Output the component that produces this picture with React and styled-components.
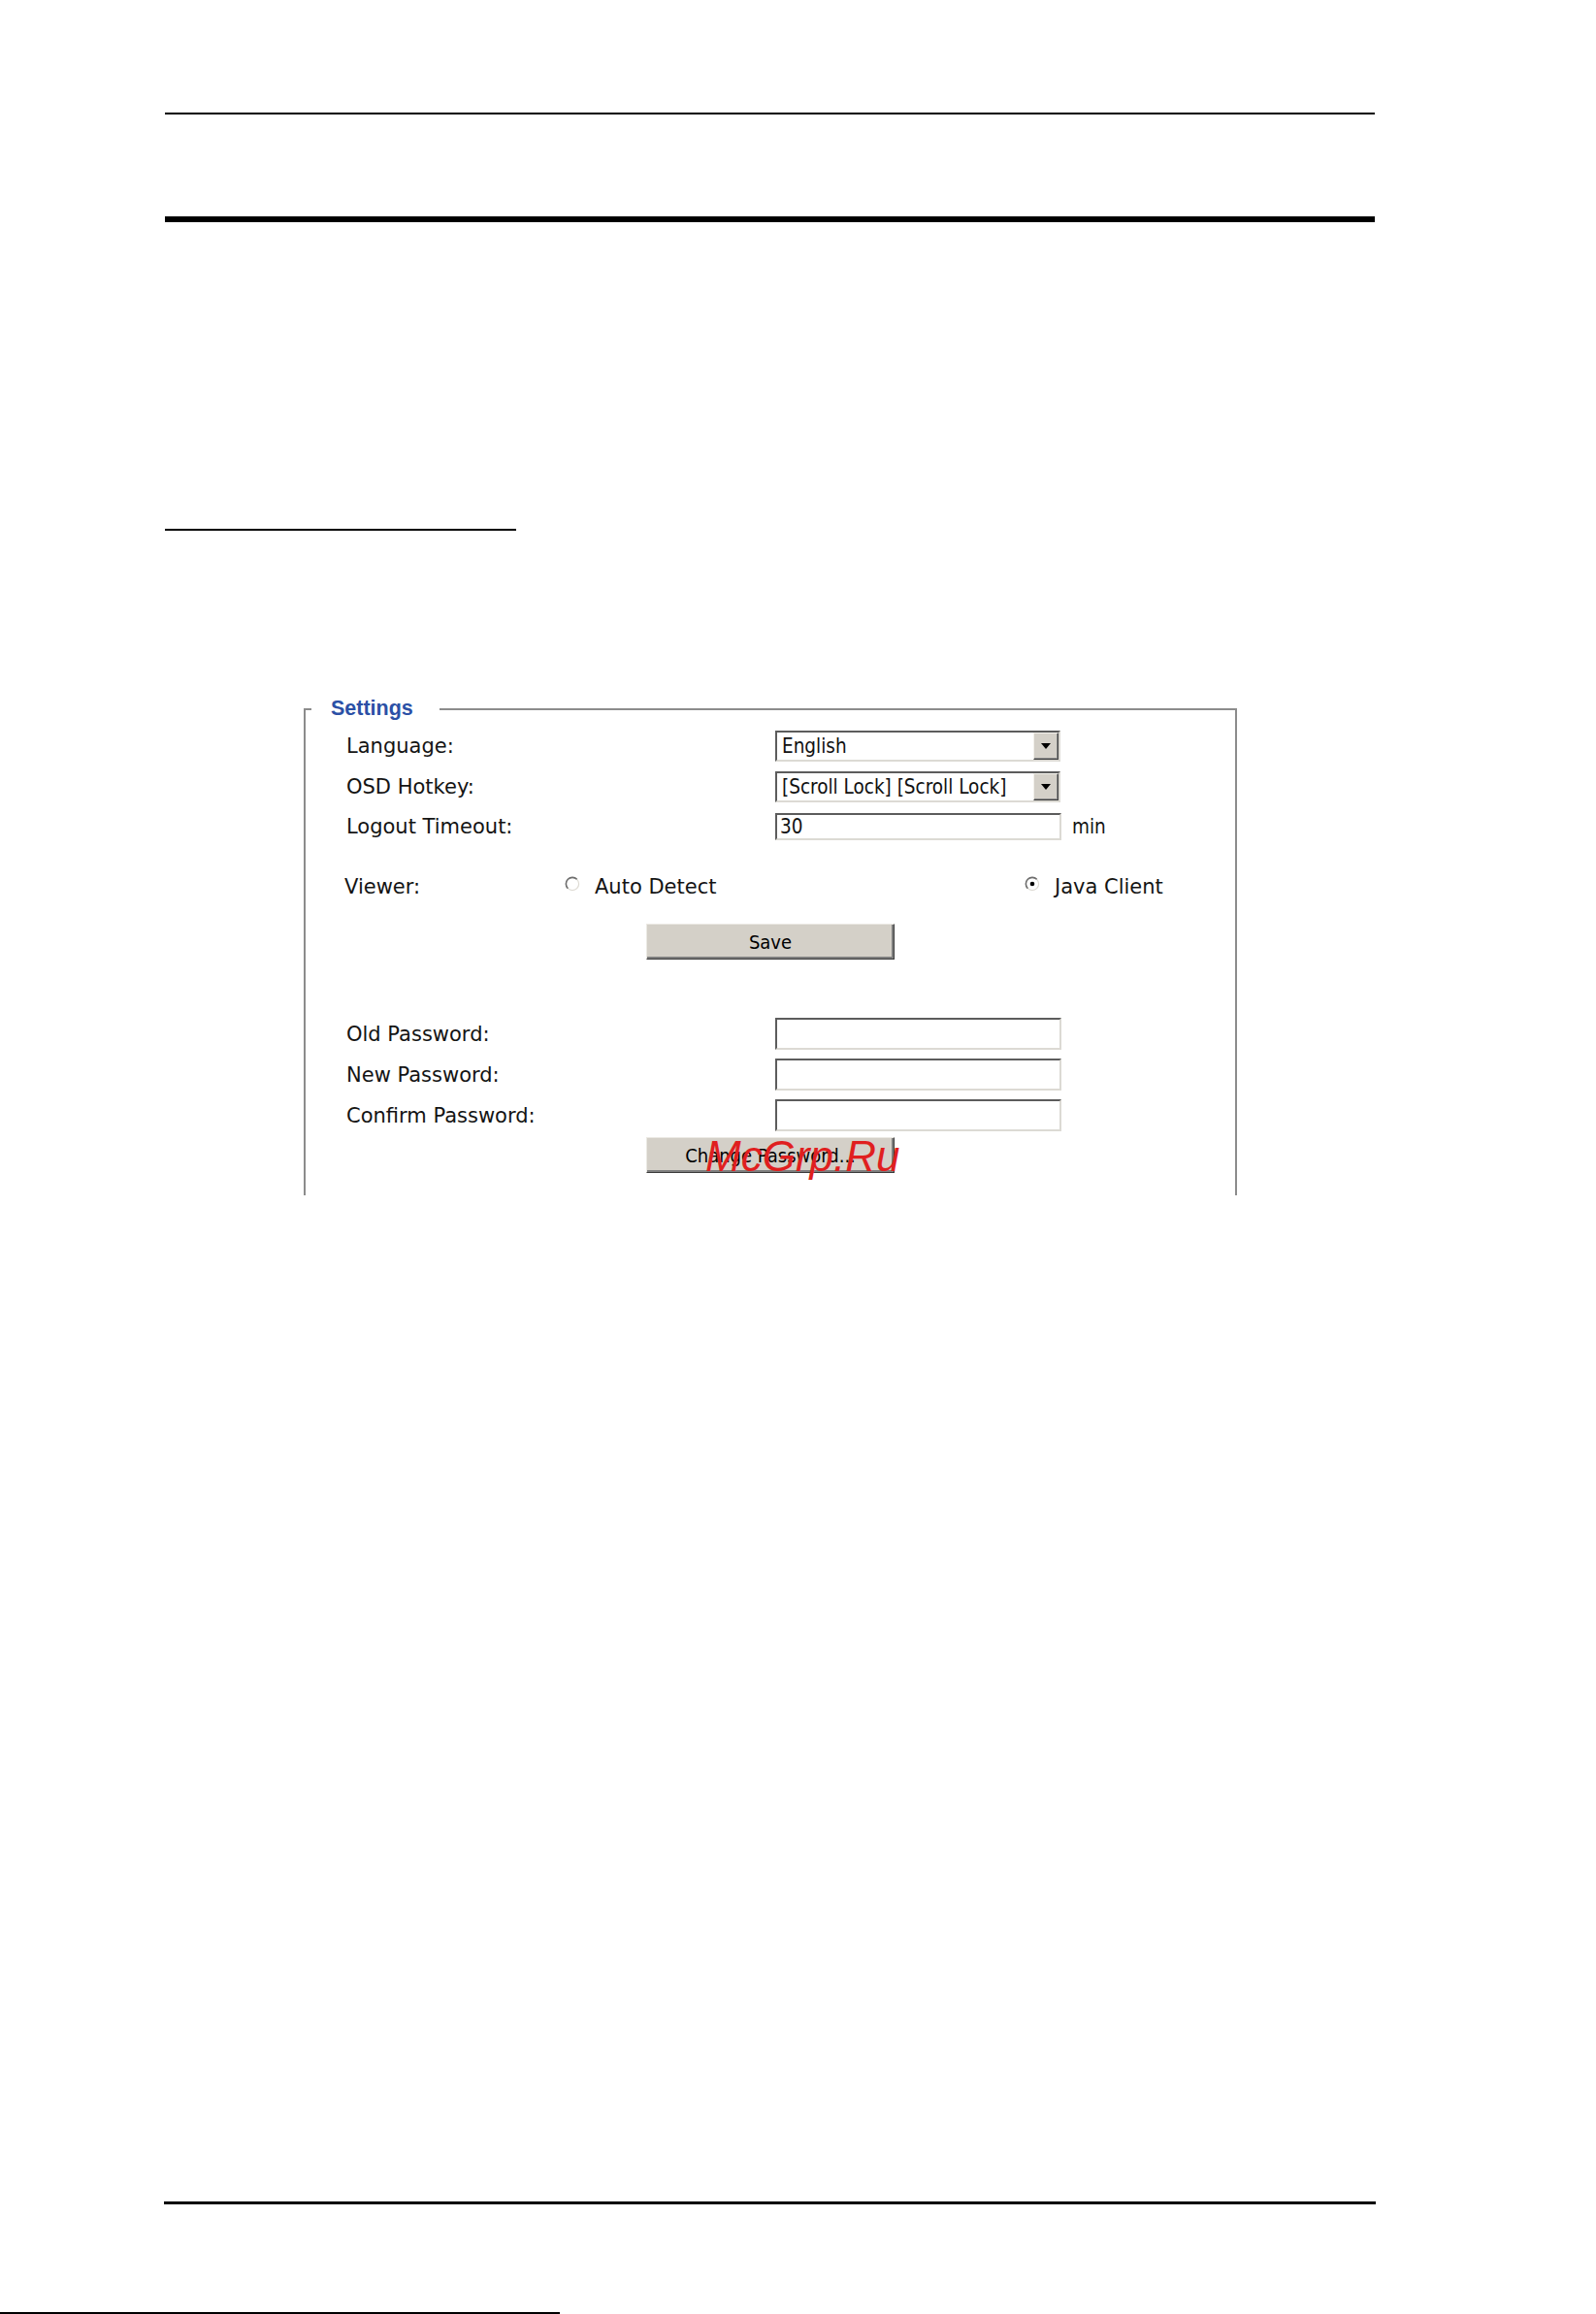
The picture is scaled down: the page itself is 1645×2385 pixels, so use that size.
import styled, { createGlobalStyle } from 'styled-components'

const GlobalStyle = createGlobalStyle`
  html, body {
    margin: 0;
    padding: 0;
    background: #fff;
  }
  body {
    font-family: "DejaVu Sans", Verdana, sans-serif;
  }
`

const labelFont = `"DejaVu Sans", Verdana, sans-serif`
const controlFont = `"DejaVu Sans Condensed", "DejaVu Sans", Tahoma, sans-serif`

function Radio({ checked }) {
  return (
    <RadioMark width="16" height="16" viewBox="0 0 16 16">
      <circle cx="8" cy="8" r="6.6" fill="#fff" stroke="#dedbd4" strokeWidth="1.2" />
      <path d="M3.3 12.7 A6.6 6.6 0 0 1 12.7 3.3" fill="none" stroke="#6e6e6e" strokeWidth="1.6" />
      {checked && <circle cx="8" cy="8" r="2.3" fill="#000" />}
    </RadioMark>
  )
}

function DropSelect({ value }) {
  return (
    <SelectBox>
      <SelectText>{value}</SelectText>
      <DropButton>
        <svg width="10" height="6" viewBox="0 0 10 6">
          <polygon points="0,0 10,0 5,6" fill="#000" />
        </svg>
      </DropButton>
    </SelectBox>
  )
}

export default function App() {
  return (
    <>
      <GlobalStyle />
      <Page>
        <Column>
          <ThinRule />
          <ThickRule />
          <SectionUnderline />

          <Settings>
            <Legend>Settings</Legend>

            <FormGrid>
              <Label>Language:</Label>
              <DropSelect value="English" />
              <Label>OSD Hotkey:</Label>
              <DropSelect value="[Scroll Lock] [Scroll Lock]" />
              <Label>Logout Timeout:</Label>
              <Inline>
                <TextField defaultValue="30" readOnly />
                <Unit>min</Unit>
              </Inline>
            </FormGrid>

            <ViewerRow>
              <ViewerLabel>Viewer:</ViewerLabel>
              <Option $width={474}>
                <Radio />
                <OptionText>Auto Detect</OptionText>
              </Option>
              <Option>
                <Radio checked />
                <OptionText>Java Client</OptionText>
              </Option>
            </ViewerRow>

            <ButtonRow>
              <PushButton type="button">Save</PushButton>
            </ButtonRow>

            <PasswordGrid>
              <Label>Old Password:</Label>
              <TextField type="password" readOnly />
              <Label>New Password:</Label>
              <TextField type="password" readOnly />
              <Label>Confirm Password:</Label>
              <TextField type="password" readOnly />
            </PasswordGrid>

            <ButtonRow $tight>
              <PushButton type="button">Change Password...</PushButton>
            </ButtonRow>

            <Stamp>McGrp.Ru</Stamp>
          </Settings>
        </Column>

        <FooterRule />
        <BottomEdge />
      </Page>
    </>
  )
}

const Page = styled.div`
  width: 1645px;
  height: 2385px;
  display: flex;
  flex-direction: column;
  overflow: hidden;
`

const Column = styled.div`
  margin-left: 170px;
  width: 1247px;
  display: flex;
  flex-direction: column;
`

const ThinRule = styled.div`
  margin-top: 116px;
  height: 2px;
  background: #000;
`

const ThickRule = styled.div`
  margin-top: 105px;
  height: 6px;
  background: #000;
`

const SectionUnderline = styled.div`
  margin-top: 316px;
  width: 362px;
  height: 2px;
  background: #000;
`

const Settings = styled.fieldset`
  position: relative;
  margin: 171px 0 0 143px;
  width: 962px;
  box-sizing: border-box;
  padding: 10px 0 23px 42px;
  border: 2px solid #8c8c8c;
  border-bottom: none;
  min-inline-size: 0;
`

const Legend = styled.legend`
  margin-left: -36px;
  padding: 0 27px 0 20px;
  font-family: "Liberation Sans", Arial, sans-serif;
  font-weight: bold;
  font-size: 21.5px;
  color: #2b50a6;
`

const FormGrid = styled.div`
  display: grid;
  grid-template-columns: 442px auto;
  grid-auto-rows: 32px;
  row-gap: 9.5px;
  align-items: center;
`

const PasswordGrid = styled(FormGrid)`
  margin-top: 60px;
  grid-auto-rows: 33px;
  row-gap: 9px;
`

const Label = styled.div`
  font-family: ${labelFont};
  font-size: 21px;
  color: #141414;
`

const Inline = styled.div`
  display: flex;
  align-items: center;
  gap: 11px;
`

const Unit = styled.span`
  font-family: ${controlFont};
  font-size: 20.5px;
  color: #141414;
`

const insetBorder = `
  box-sizing: border-box;
  border-style: solid;
  border-width: 2px;
  border-color: #5c5c5c #dcdad4 #dcdad4 #5c5c5c;
  background: #fff;
`

const SelectBox = styled.div`
  ${insetBorder}
  width: 294px;
  height: 32px;
  display: flex;
  align-items: center;
`

const SelectText = styled.span`
  flex: 1;
  padding-left: 5px;
  font-family: ${controlFont};
  font-size: 20.5px;
  color: #111;
  white-space: nowrap;
  overflow: hidden;
`

const DropButton = styled.span`
  box-sizing: border-box;
  width: 26px;
  height: 28px;
  display: flex;
  align-items: center;
  justify-content: center;
  background: #d4d0c8;
  border: 1px solid;
  border-color: #f2f0eb #404040 #404040 #f2f0eb;
  box-shadow: inset -1px -1px #8a8a8a;
`

const TextField = styled.input`
  ${insetBorder}
  width: 295px;
  height: 100%;
  margin: 0;
  padding: 0 3px;
  font-family: ${controlFont};
  font-size: 20.5px;
  color: #111;
  outline: none;
`

const ViewerRow = styled.div`
  margin-top: 30px;
  height: 32px;
  display: flex;
  align-items: center;
`

const ViewerLabel = styled(Label)`
  width: 227px;
  margin-left: -2px;
`

const Option = styled.div`
  display: flex;
  align-items: center;
  gap: 15px;
  width: ${p => (p.$width ? `${p.$width}px` : 'auto')};
`

const RadioMark = styled.svg`
  display: block;
  margin-top: -6px;
`

const OptionText = styled.span`
  font-family: ${labelFont};
  font-size: 21px;
  color: #141414;
`

const ButtonRow = styled.div`
  display: flex;
  justify-content: center;
  margin-left: -42px;
  margin-top: ${p => (p.$tight ? '6px' : '22px')};
`

const PushButton = styled.button`
  box-sizing: border-box;
  width: 256px;
  height: 37px;
  padding: 0;
  background: #d4d0c8;
  border: 1px solid;
  border-color: #ebe9e3 #3c3c3c #3c3c3c #ebe9e3;
  box-shadow: inset -2px -2px #7e7e7e;
  font-family: ${controlFont};
  font-size: 20px;
  color: #000;
`

const Stamp = styled.span`
  position: absolute;
  left: 412px;
  top: 424px;
  font-family: "Liberation Sans", Arial, sans-serif;
  font-style: italic;
  font-size: 44px;
  color: #e01f1f;
  pointer-events: none;
`

const FooterRule = styled.div`
  margin: auto 0 0 169px;
  width: 1249px;
  height: 3px;
  background: #000;
`

const BottomEdge = styled.div`
  margin-top: 111px;
  width: 577px;
  height: 2px;
  background: #000;
`
